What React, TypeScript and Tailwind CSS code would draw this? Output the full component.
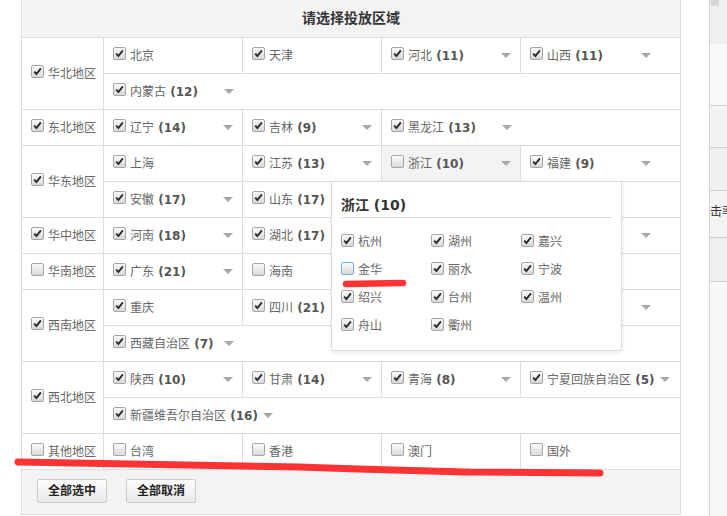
import clsx from 'clsx'

type Item = { name: string; count?: number; off?: boolean; active?: boolean }
type Region = { name: string; off?: boolean; rows: Item[][] }

const regions: Region[] = [
  {
    name: '华北地区',
    rows: [
      [{ name: '北京' }, { name: '天津' }, { name: '河北', count: 11 }, { name: '山西', count: 11 }],
      [{ name: '内蒙古', count: 12 }],
    ],
  },
  {
    name: '东北地区',
    rows: [[{ name: '辽宁', count: 14 }, { name: '吉林', count: 9 }, { name: '黑龙江', count: 13 }]],
  },
  {
    name: '华东地区',
    rows: [
      [{ name: '上海' }, { name: '江苏', count: 13 }, { name: '浙江', count: 10, off: true, active: true }, { name: '福建', count: 9 }],
      [{ name: '安徽', count: 17 }, { name: '山东', count: 17 }],
    ],
  },
  {
    name: '华中地区',
    rows: [[{ name: '河南', count: 18 }, { name: '湖北', count: 17 }, { name: '湖南', count: 14 }, { name: '江西', count: 11 }]],
  },
  {
    name: '华南地区',
    off: true,
    rows: [[{ name: '广东', count: 21 }, { name: '海南', off: true }, { name: '广西', count: 14 }]],
  },
  {
    name: '西南地区',
    rows: [
      [{ name: '重庆' }, { name: '四川', count: 21 }, { name: '贵州', count: 9 }, { name: '云南', count: 16 }],
      [{ name: '西藏自治区', count: 7 }],
    ],
  },
  {
    name: '西北地区',
    rows: [
      [{ name: '陕西', count: 10 }, { name: '甘肃', count: 14 }, { name: '青海', count: 8 }, { name: '宁夏回族自治区', count: 5 }],
      [{ name: '新疆维吾尔自治区', count: 16 }],
    ],
  },
  {
    name: '其他地区',
    off: true,
    rows: [[{ name: '台湾', off: true }, { name: '香港', off: true }, { name: '澳门', off: true }, { name: '国外', off: true }]],
  },
]

// 浙江下拉
const cities = [
  { name: '杭州' }, { name: '湖州' }, { name: '嘉兴' },
  { name: '金华', off: true }, { name: '丽水' }, { name: '宁波' },
  { name: '绍兴' }, { name: '台州' }, { name: '温州' },
  { name: '舟山' }, { name: '衢州' },
]

function Box({ checked = true, focus = false }: { checked?: boolean; focus?: boolean }) {
  return (
    <span
      className={clsx(
        'mb-[4px] inline-flex h-[13px] w-[13px] shrink-0 items-center justify-center rounded-[2px] border bg-linear-to-b from-[#fbfbfb] to-[#d9d9d9]',
        focus ? 'border-[#78b0e8]' : 'border-[#a4a4a4]'
      )}
    >
      {checked && (
        <svg width="9" height="9" viewBox="0 0 9 9">
          <path d="M1.2 4.6 L3.4 7 L7.9 1.4" stroke="#2b2b2b" strokeWidth="1.9" fill="none" />
        </svg>
      )}
    </span>
  )
}

function Arrow() {
  return <span className="h-0 w-0 shrink-0 border-x-[5px] border-t-[5px] border-x-transparent border-t-[#a8a8a8]" />
}

function Cell({ item, last }: { item: Item; last: boolean }) {
  return (
    <div
      className={clsx(
        'flex min-w-[139px] items-center pl-[9px] pr-[9px]',
        !last && 'border-r border-[#ddd]',
        item.active && 'bg-[#f3f3f3]'
      )}
    >
      <Box checked={!item.off} />
      <span className="ml-[4px] whitespace-nowrap text-[#666]">
        {item.name}
        {item.count !== undefined && <b className="font-bold text-[#555]"> ({item.count})</b>}
      </span>
      {item.count !== undefined && (
        <span className="ml-auto flex pl-[5px]">
          <Arrow />
        </span>
      )}
    </div>
  )
}

export default function App() {
  return (
    <div className="relative flex h-[516px] w-[727px] overflow-hidden bg-white font-['DejaVu_Sans','Noto_Sans_CJK_SC',sans-serif] text-[12px]">
      {/* 主面板 */}
      <div className="ml-[21px] flex h-[515px] w-[660px] shrink-0 flex-col border-x border-b border-[#ddd]">
        <div className="flex h-[38px] shrink-0 items-center justify-center border-b border-[#ddd] bg-[#f3f3f3] text-[14px] font-bold text-[#333]">
          请选择投放区域
        </div>

        {regions.map((r) => (
          <div key={r.name} className="flex shrink-0 border-b border-[#ddd]">
            <div className="flex w-[82px] shrink-0 items-center border-r border-[#ddd] pl-[9px]">
              <Box checked={!r.off} />
              <span className="ml-[4px] text-[#666]">{r.name}</span>
            </div>
            <div className="flex flex-1 flex-col">
              {r.rows.map((row, i) => (
                <div
                  key={i}
                  className={clsx('flex', i < r.rows.length - 1 ? 'h-[36px] border-b border-[#ddd]' : 'h-[35px]')}
                >
                  {row.map((item, j) => (
                    <Cell key={item.name} item={item} last={j === row.length - 1} />
                  ))}
                </div>
              ))}
            </div>
          </div>
        ))}

        <div className="flex flex-1 items-start gap-[19px] bg-[#f3f3f3] pl-[15px] pt-[9px]">
          <button className="h-[24px] w-[70px] rounded-[2px] border border-[#ccc] bg-linear-to-b from-[#fdfdfd] to-[#e9e9e9] text-[12px] font-bold text-[#222]">
            全部选中
          </button>
          <button className="h-[24px] w-[70px] rounded-[2px] border border-[#ccc] bg-linear-to-b from-[#fdfdfd] to-[#e9e9e9] text-[12px] font-bold text-[#222]">
            全部取消
          </button>
        </div>
      </div>

      <div className="w-[28px] shrink-0" />

      {/* 右侧被遮挡的面板 */}
      <div className="flex w-[18px] shrink-0 flex-col overflow-hidden border-l border-[#d4d4d4] text-[#333]">
        <div className="h-[44px] bg-[#efefef] pl-[1px]">
          <span className="block h-[6px] w-[8px] bg-[#d6d6d6]" />
        </div>
        <div className="h-[62px] border-b border-[#cfcfcf] bg-[#f8f8f8]" />
        <div className="h-[42px] border-b border-[#cfcfcf] bg-[#f2f2f2]" />
        <div className="h-[43px] border-b border-[#cfcfcf] bg-[#f0f0f0]" />
        <div className="flex h-[47px] items-center whitespace-nowrap border-b border-[#cfcfcf] bg-[#f3f3f3] pb-[4px]">
          击率
        </div>
        <div className="h-[44px] border-b border-[#cfcfcf] bg-[#efefef]" />
        <div className="flex-1 bg-[#f7f7f7]" />
      </div>

      {/* 浙江城市弹层 */}
      <div className="absolute left-[331px] top-[181px] h-[170px] w-[291px] rounded-[2px] border border-[#ddd] bg-white shadow-[0_1px_4px_rgba(0,0,0,0.12)]">
        <div className="mx-[9px] mt-[13px] flex h-[23px] items-start border-b border-[#ddd] text-[14px] font-bold text-[#333]">
          浙江 (10)
        </div>
        <div className="ml-[9px] mt-[10px] grid grid-cols-[90px_90px_90px]">
          {cities.map((c) => (
            <div key={c.name} className="flex h-[28px] items-center">
              <Box checked={!c.off} focus={c.off} />
              <span className="ml-[4px] text-[#666]">{c.name}</span>
            </div>
          ))}
        </div>
      </div>

      {/* 红色标注 */}
      <svg className="pointer-events-none absolute left-0 top-0" width="727" height="516">
        <path d="M346 284 L403 283" stroke="#ff3333" strokeWidth="6.5" strokeLinecap="round" fill="none" />
        <path
          d="M18 462 C 120 463, 220 465, 300 467 C 380 470, 440 471, 470 472 L 600 473"
          stroke="#ff3333"
          strokeWidth="7"
          strokeLinecap="round"
          fill="none"
        />
      </svg>
    </div>
  )
}
